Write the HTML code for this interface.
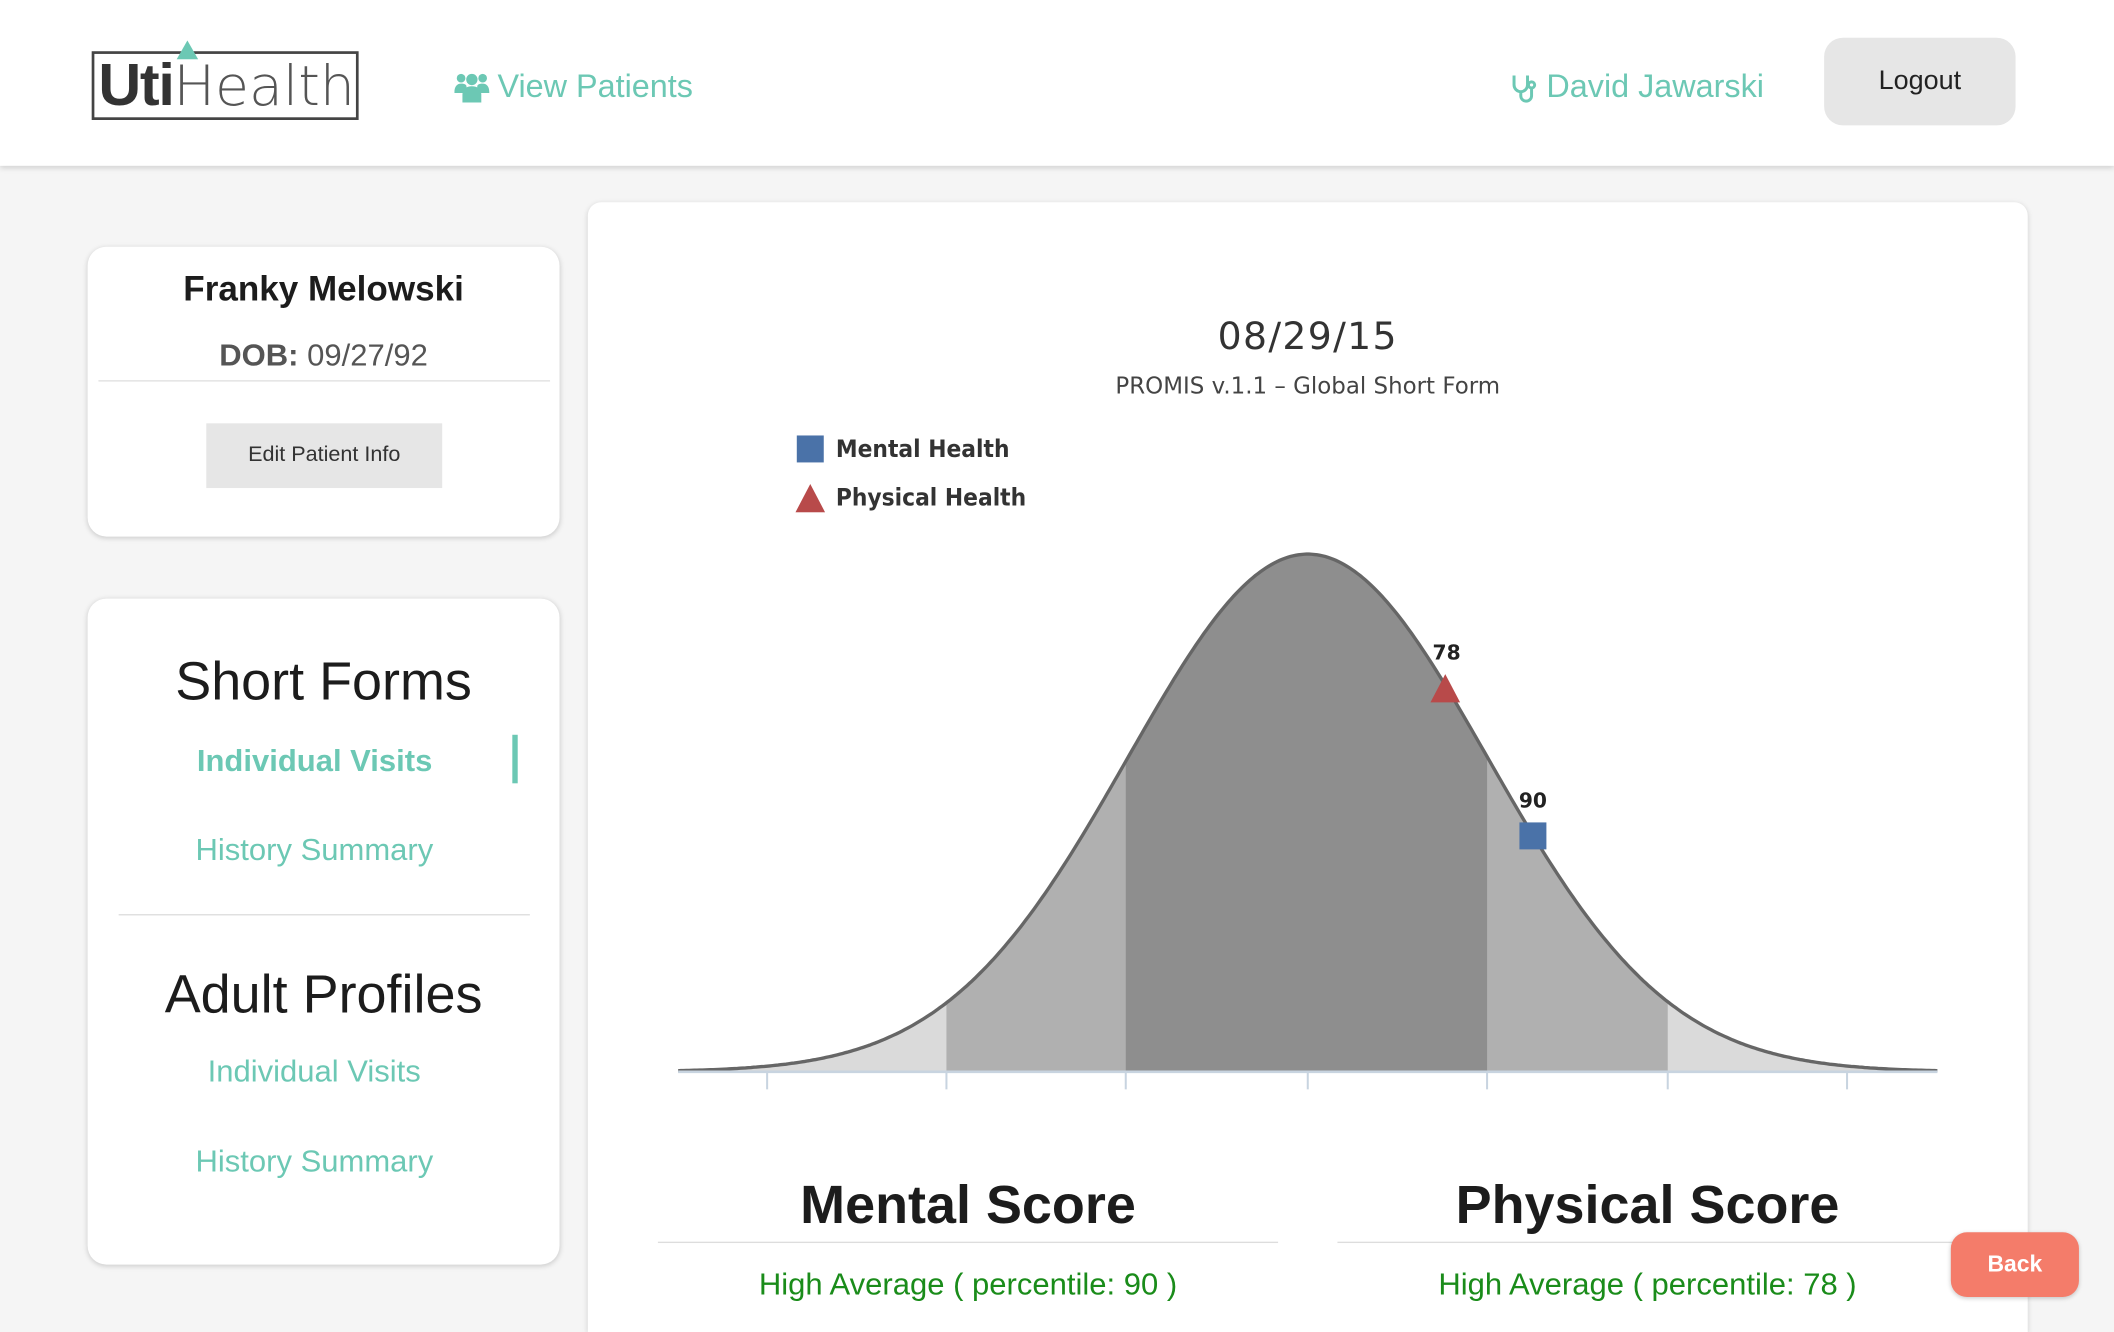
<!DOCTYPE html>
<html><head><meta charset="utf-8"><style>
html,body{margin:0;padding:0;width:2114px;height:1332px;overflow:hidden;background:#f5f5f5;font-family:"Liberation Sans",Arial,sans-serif}
#s{position:absolute;left:0;top:0;width:1568px;height:988px;overflow:hidden;transform:scale(1.34821);transform-origin:0 0}
.a{position:absolute}
.hdr{left:0;top:0;width:1568px;height:123px;background:#fff;box-shadow:0 2px 4px rgba(0,0,0,.15)}
.teal{color:#6cc8b4}
.card{background:#fff;border-radius:14px;box-shadow:0 1px 4px rgba(0,0,0,.18)}
.c{text-align:center}
</style></head><body><div id="s">
<div class="a hdr"></div>
<div class="a" style="left:68px;top:38px;width:194px;height:47px;border:2px solid #444"></div>
<svg class="a" style="left:130px;top:30px" width="18" height="14"><polygon points="9,0 17,14 1,14" fill="#6cc8b4"/></svg>
<div class="a" style="left:73px;top:36px;font-size:44px;color:#333;letter-spacing:-1px;line-height:56px"><b>Uti</b><span style="color:#555;letter-spacing:0;font-family:'DejaVu Sans ExtraLight','DejaVu Sans',sans-serif;font-weight:200;font-size:41px">Health</span></div>
<svg class="a" style="left:337px;top:53px" width="26" height="24" viewBox="0 0 26 24" fill="#6cc8b4"><circle cx="5" cy="5" r="3.2"/><circle cx="21" cy="5" r="3.2"/><circle cx="13" cy="6" r="4.2"/><path d="M0 16c0-5 2-7 5-7s4 1 4 2v5z M17 16v-5c0-1 1-2 4-2s5 2 5 7z M6 23v-6c0-4 3-6 7-6s7 2 7 6v6z"/></svg>
<div class="a teal" style="left:369px;top:51px;font-size:24px">View Patients</div>
<svg class="a" style="left:1120px;top:54px" width="22" height="24" viewBox="0 0 22 24" fill="none" stroke="#6cc8b4" stroke-width="2.2"><path d="M3 2v7a5 5 0 0 0 10 0V2M8 14v3a4 4 0 0 0 8 0v-5"/><circle cx="16" cy="9" r="2.3"/></svg>
<div class="a teal" style="left:1147px;top:51px;font-size:24px">David Jawarski</div>
<div class="a c" style="left:1353px;top:28px;width:142px;height:65px;background:#e6e6e6;border-radius:14px;line-height:64px;font-size:20px;color:#222">Logout</div>

<div class="a card" style="left:65px;top:183px;width:350px;height:215px"></div>
<div class="a c" style="left:65px;top:199px;width:350px;font-size:26px;font-weight:bold;color:#1c1c1c">Franky Melowski</div>
<div class="a c" style="left:65px;top:250px;width:350px;font-size:23px;color:#555"><b>DOB:</b> 09/27/92</div>
<div class="a" style="left:73px;top:282px;width:335px;height:1px;background:#e0e0e0"></div>
<div class="a c" style="left:153px;top:314px;width:175px;height:48px;background:#e6e6e6;line-height:48px;font-size:16px;color:#333">Edit Patient Info</div>

<div class="a card" style="left:65px;top:444px;width:350px;height:494px"></div>
<div class="a c" style="left:65px;top:484px;width:350px;font-size:40px;color:#1c1c1c">Short Forms</div>
<div class="a teal" style="left:146px;top:551px;font-size:23px;font-weight:bold">Individual Visits</div>
<div class="a" style="left:380px;top:545px;width:4px;height:36px;background:#6cc8b4"></div>
<div class="a teal" style="left:145px;top:617px;font-size:23px">History Summary</div>
<div class="a" style="left:88px;top:678px;width:305px;height:1px;background:#ddd"></div>
<div class="a c" style="left:65px;top:716px;width:350px;font-size:40px;color:#1c1c1c">Adult Profiles</div>
<div class="a teal" style="left:154px;top:781px;font-size:23px">Individual Visits</div>
<div class="a teal" style="left:145px;top:848px;font-size:23px">History Summary</div>

<div class="a" style="left:436px;top:150px;width:1068px;height:838px;background:#fff;border-radius:10px 10px 0 0;box-shadow:0 1px 4px rgba(0,0,0,.15)"></div>
<div class="a c" style="left:436px;top:233px;width:1068px;font-size:28px;color:#333;font-family:'DejaVu Sans',sans-serif;letter-spacing:1px">08/29/15</div>
<div class="a c" style="left:436px;top:277px;width:1068px;font-size:17px;color:#444;font-family:'DejaVu Sans',sans-serif">PROMIS v.1.1 – Global Short Form</div>
<div class="a" style="left:591px;top:323px;width:20px;height:20px;background:#4a72a8"></div>
<div class="a" style="left:620px;top:323px;font-size:18px;font-weight:bold;color:#333;font-family:'DejaVu Sans Condensed','DejaVu Sans',sans-serif">Mental Health</div>
<svg class="a" style="left:590px;top:359px" width="22" height="21"><polygon points="11,0 22,21 0,21" fill="#b84a4a"/></svg>
<div class="a" style="left:620px;top:359px;font-size:18px;font-weight:bold;color:#333;font-family:'DejaVu Sans Condensed','DejaVu Sans',sans-serif">Physical Health</div>

<svg class="a" style="left:0;top:0" width="1568" height="988">
<g id="g"></g>
<text x="1073" y="489" font-size="15" font-weight="bold" text-anchor="middle" font-family="DejaVu Sans,sans-serif" fill="#222">78</text>
<polygon points="1072,500 1083,521 1061,521" fill="#b84a4a"/>
<text x="1137" y="599" font-size="15" font-weight="bold" text-anchor="middle" font-family="DejaVu Sans,sans-serif" fill="#222">90</text>
<rect x="1127" y="610" width="20" height="20" fill="#4a72a8"/>
</svg>

<div class="a c" style="left:488px;top:872px;width:460px;font-size:40px;font-weight:bold;color:#1c1c1c">Mental Score</div>
<div class="a" style="left:488px;top:921px;width:460px;height:1px;background:#ddd"></div>
<div class="a c" style="left:488px;top:939px;width:460px;font-size:23px;color:#1a8c1a">High Average ( percentile: 90 )</div>
<div class="a c" style="left:992px;top:872px;width:460px;font-size:40px;font-weight:bold;color:#1c1c1c">Physical Score</div>
<div class="a" style="left:992px;top:921px;width:460px;height:1px;background:#ddd"></div>
<div class="a c" style="left:992px;top:939px;width:460px;font-size:23px;color:#1a8c1a">High Average ( percentile: 78 )</div>
<div class="a c" style="left:1447px;top:914px;width:95px;height:48px;background:#f47c6a;border-radius:12px;line-height:48px;color:#fff;font-size:17px;font-weight:bold;box-shadow:0 1px 3px rgba(0,0,0,.2)">Back</div>
</div>
<script>
(function(){var mu=970,sd=133.5,H=384,B=795;
function y(x){return B-H*Math.exp(-0.5*Math.pow((x-mu)/sd,2));}
function area(a,b,f){var d="M"+a+" "+B;for(var x=a;x<=b;x+=2)d+=" L"+x+" "+y(x).toFixed(1);d+=" L"+b+" "+y(b).toFixed(1)+" L"+b+" "+B+"Z";return '<path d="'+d+'" fill="'+f+'"/>';}
var s=area(503,1437,"#dadada")+area(702,1237,"#b0b0b0")+area(835,1103,"#8e8e8e");
var d="M503 "+y(503).toFixed(1);for(var x=505;x<=1437;x+=2)d+=" L"+x+" "+y(x).toFixed(1);
s+='<path d="'+d+'" fill="none" stroke="#666" stroke-width="2.5"/>';
s+='<line x1="503" y1="795" x2="1437" y2="795" stroke="#c8d4e0" stroke-width="2"/>';
[569,702,835,970,1103,1237,1370].forEach(function(t){s+='<line x1="'+t+'" y1="795" x2="'+t+'" y2="808" stroke="#c8d4e0" stroke-width="1.5"/>';});
document.getElementById("g").innerHTML=s;})();
</script>
</body></html>
